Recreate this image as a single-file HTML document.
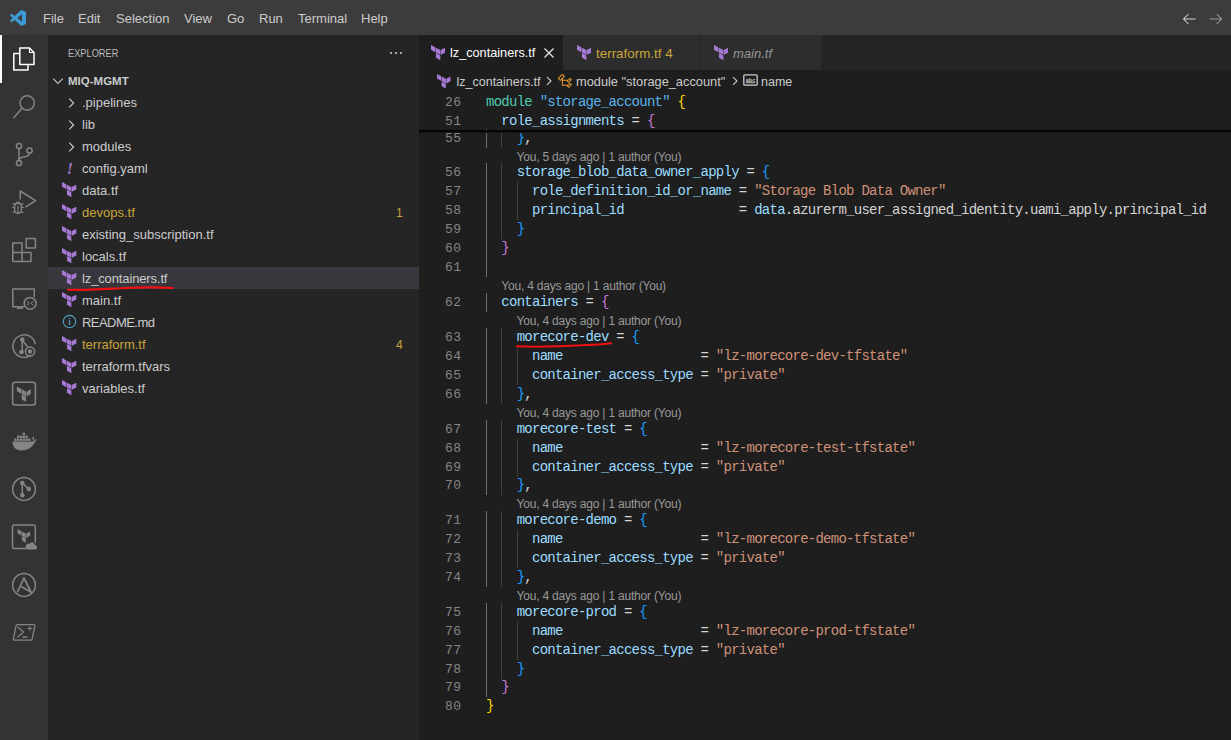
<!DOCTYPE html>
<html><head><meta charset="utf-8">
<style>
*{box-sizing:border-box}
html,body{margin:0;padding:0}
body{width:1231px;height:740px;overflow:hidden;position:relative;background:#1e1e1e;font-family:"Liberation Sans",sans-serif}
.abs{position:absolute}
svg{display:block}
.menu{position:absolute;top:1px;height:35px;line-height:35px;font-size:13px;color:#cccccc}
.ln{position:absolute;left:406.5px;width:55px;text-align:right;height:19px;line-height:19px;font-family:"Liberation Mono",monospace;font-size:13px;color:#858585;letter-spacing:0.5px}
.cd{position:absolute;left:486px;height:19px;line-height:19px;white-space:pre;font-family:"Liberation Mono",monospace;font-size:14px;color:#d4d4d4;letter-spacing:-0.74px}
.cl{position:absolute;height:16px;line-height:16px;white-space:pre;font-size:12px;letter-spacing:-0.2px;color:#999999}
.row{position:absolute;left:82px;height:22px;line-height:22px;font-size:13px;white-space:pre}
.tabt{position:absolute;top:36px;height:35px;line-height:35px;font-size:13px;white-space:pre}
.bc{position:absolute;top:71px;height:22px;line-height:22px;font-size:12.5px;color:#cccccc;white-space:pre}
</style></head><body>
<div class="abs" style="left:0;top:0;width:1231px;height:35px;background:#3c3c3c"></div>
<svg class="abs" style="left:10px;top:10px" width="16" height="16" viewBox="0 0 100 100"><path fill="#3c99d4" d="M96.5 10.8L75.9 0.9C73.5-0.3 70.7 0.2 68.8 2.1L29.4 38 12.3 25c-1.6-1.2-3.8-1.1-5.3 0.2L1.5 30.3c-1.8 1.7-1.8 4.5 0 6.2L16.3 50 1.5 63.5c-1.8 1.7-1.8 4.5 0 6.2L7 74.8c1.5 1.4 3.7 1.5 5.3 0.3L29.4 62l39.4 35.9c1.9 1.9 4.7 2.4 7.1 1.2l20.6-9.9c2.2-1 3.5-3.2 3.5-5.6V16.4c0-2.4-1.4-4.6-3.5-5.6zM75 72.7L45.1 50 75 27.3z"/></svg>
<div class="menu" style="left:43px">File</div>
<div class="menu" style="left:78px">Edit</div>
<div class="menu" style="left:116px">Selection</div>
<div class="menu" style="left:184px">View</div>
<div class="menu" style="left:227px">Go</div>
<div class="menu" style="left:259px">Run</div>
<div class="menu" style="left:298px">Terminal</div>
<div class="menu" style="left:361px">Help</div>
<svg class="abs" style="left:1181px;top:10.5px" width="16" height="16" viewBox="0 0 16 16"><path d="M14.6 8H2.6M7.5 3L2.6 8l4.9 5" fill="none" stroke="#d0d0d0" stroke-width="1.05"/></svg>
<svg class="abs" style="left:1208px;top:10.5px" width="16" height="16" viewBox="0 0 16 16"><path d="M1.6 8h12M8.7 3l4.9 5-4.9 5" fill="none" stroke="#9a9a9a" stroke-width="1.05"/></svg>

<div class="abs" style="left:0;top:35px;width:48px;height:705px;background:#333333"></div>
<svg class="abs" style="left:0;top:0" width="48" height="740" viewBox="0 0 48 740">
<rect x="0" y="35" width="2" height="48" fill="#ffffff"/>
<g fill="none" stroke="#ffffff" stroke-width="1.5" stroke-linejoin="round">
 <path d="M19.5 53.5 H13.8 V70 H28 V65"/>
 <path d="M19.8 48 H29.5 L34 52.5 V64.5 H19.8 Z"/>
 <path d="M29.5 48 V52.5 H34" stroke-width="1.2"/>
</g>
<g fill="none" stroke="#858585" stroke-width="1.5" stroke-linecap="round" stroke-linejoin="round">
 <!-- search -->
 <circle cx="27.2" cy="103" r="7.2"/>
 <path d="M21.8 108.5 L14 117.5"/>
 <!-- source control -->
 <circle cx="19" cy="146" r="2.6"/>
 <circle cx="19" cy="163" r="2.6"/>
 <circle cx="29.6" cy="150.5" r="2.6"/>
 <path d="M19 148.6 V160.4"/>
 <path d="M29.6 153.1 C29.6 157 25 157 21.5 157.5 C19.8 157.8 19 159 19 160.4"/>
 <!-- run and debug -->
 <path d="M20.2 199 V191 L35.6 200.6 L25.8 206.8"/>
 <path d="M14.6 205.5 C14.6 202.5 21.4 202.5 21.4 205.5 V210 C21.4 214.5 14.6 214.5 14.6 210 Z" stroke-width="1.4"/>
 <path d="M16 203.5 C16 201.5 20 201.5 20 203.5 M12.3 207.5 H14.6 M21.4 207.5 H23.7 M12.8 212.5 L14.8 211.5 M23.2 212.5 L21.2 211.5 M13 203.5 L14.8 205 M23 203.5 L21.2 205 M18 206 V213" stroke-width="1.1"/>
 <!-- extensions -->
 <path d="M12.8 243 H22 V252.6 H31 V261.6 H12.8 Z M12.8 252.6 H22 V261.6"/>
 <rect x="26.2" y="238.5" width="9.2" height="9.4"/>
 <!-- remote explorer -->
 <path d="M23.5 306.8 H12.8 V289 H34.3 V296.5"/>
 <path d="M17.5 308.3 H22.5"/>
 <circle cx="30.1" cy="303.3" r="5.9"/>
 <path d="M27.3 301.7 L29.3 303.3 L27.3 304.9 M33 301.7 L31 303.3 L33 304.9" stroke-width="1"/>
 <!-- gitlens -->
 <path d="M30.5 355.6 A11.3 11.3 0 1 1 35.2 343.5"/>
 <circle cx="22.3" cy="339.6" r="1.6" fill="#858585"/>
 <circle cx="21.5" cy="352" r="1.6" fill="#858585"/>
 <path d="M22.2 340 V351.5 M22.6 340.5 L27.2 346.3"/>
 <circle cx="30" cy="351.5" r="4.6"/>
 <circle cx="30" cy="351.5" r="2.2" fill="#858585" stroke="none"/>
 <!-- terraform -->
 <rect x="12.6" y="382.2" width="22.8" height="22.8" rx="2.5"/>
 <!-- git graph -->
 <circle cx="24" cy="489" r="11.4"/>
 <path d="M22.3 483 V495.2 M22.3 483 L28.8 489.1" />
 <!-- tf cloud -->
 <path d="M26.5 548.5 H14.5 Q12.5 548.5 12.5 546.5 V527 Q12.5 525 14.5 525 H33.3 Q35.3 525 35.3 527 V542"/>
 <!-- ansible -->
 <circle cx="24" cy="585" r="11.4"/>
 <!-- powershell -->
 <path d="M17.6 624.6 H33.6 Q35.1 624.6 34.8 626 L32.2 638.8 Q31.9 640.2 30.4 640.2 H14.6 Q13.1 640.2 13.4 638.8 L16 626 Q16.3 624.6 17.6 624.6 Z" stroke-width="1.3"/>
 <path d="M18.2 627.5 L23.6 632 L17.8 637 M22.8 637 H27" stroke-width="1.3"/>
 <path d="M29.8 626.5 V630.5 M27.8 628.5 H31.8" stroke-width="1"/>
</g>
<g fill="#858585">
 <!-- gitgraph dots -->
 <circle cx="22.3" cy="483" r="2.3"/>
 <circle cx="28.8" cy="489.1" r="2.3"/>
 <circle cx="22.3" cy="495.2" r="2.3"/>
 <!-- terraform logo in square (grey) -->
 <path transform="translate(16.9,386.5) scale(0.66,0.64) translate(-1.44,0)" d="M1.44 0v7.575l6.561 3.79V3.787zm21.12 4.227l-6.561 3.791v7.574l6.56-3.787zM8.72 4.23v7.575l6.561 3.787V8.018zm0 8.405v7.575L15.28 24v-7.578z"/>
 <!-- tf cloud logo -->
 <path transform="translate(17.5,529) scale(0.6,0.57) translate(-1.44,0)" d="M1.44 0v7.575l6.561 3.79V3.787zm21.12 4.227l-6.561 3.791v7.574l6.56-3.787zM8.72 4.23v7.575l6.561 3.787V8.018zm0 8.405v7.575L15.28 24v-7.578z"/>
 <path d="M27.8 549.6 H34.6 A2.3 2.3 0 0 0 35 545 A3 3 0 0 0 29.6 543.8 A2.6 2.6 0 0 0 27.8 549.6 Z"/>
 <!-- ansible A -->
 <path d="M17.3 592.3 L24 578 L31.2 592.3 L21.3 586.4" fill="none" stroke="#858585" stroke-width="1.7" stroke-linejoin="round"/>
 <!-- docker -->
 <path d="M12.5 441.5 H32 C33.3 441.5 34 440.6 34.6 439.8 C35.5 439.3 36.2 439.4 36.6 439.8 C35.8 440.3 35.2 441.4 34.6 442.5 C32.5 447.5 27.5 450.5 21 450.5 C15.5 450.5 12.8 447 12.5 441.5 Z"/>
 <path d="M32.6 440 C32.2 438.5 32.5 437.2 33.3 436.6 C34 437.2 34.3 438.3 34.1 439.5 Z"/>
 <rect x="14.2" y="438.5" width="2.4" height="2.4"/><rect x="17" y="438.5" width="2.4" height="2.4"/><rect x="19.8" y="438.5" width="2.4" height="2.4"/><rect x="22.6" y="438.5" width="2.4" height="2.4"/><rect x="25.4" y="438.5" width="2.4" height="2.4"/><rect x="28.2" y="438.5" width="2.4" height="2.4"/>
 <rect x="17" y="435.6" width="2.4" height="2.4"/><rect x="19.8" y="435.6" width="2.4" height="2.4"/><rect x="22.6" y="435.6" width="2.4" height="2.4"/><rect x="25.4" y="435.6" width="2.4" height="2.4"/>
 <rect x="22.6" y="432.7" width="2.4" height="2.4"/>
</g>
</svg>


<div class="abs" style="left:48px;top:35px;width:371px;height:705px;background:#252526"></div>
<div class="abs" style="left:68px;top:46px;height:14px;line-height:14px;font-size:11px;color:#bbbbbb;transform:scaleX(0.84);transform-origin:0 0">EXPLORER</div>
<svg class="abs" style="left:388px;top:45px" width="16" height="16" viewBox="0 0 16 16"><circle cx="3" cy="8" r="1.1" fill="#c5c5c5"/><circle cx="8" cy="8" r="1.1" fill="#c5c5c5"/><circle cx="13" cy="8" r="1.1" fill="#c5c5c5"/></svg>
<svg class="abs" style="left:50px;top:73px" width="16" height="16" viewBox="0 0 16 16"><path d="M3.2 5.6l4.8 4.8 4.8-4.8" fill="none" stroke="#c5c5c5" stroke-width="1.1"/></svg>
<div class="abs" style="left:68px;top:73px;height:16px;line-height:16px;font-size:11.5px;font-weight:bold;color:#cccccc">MIQ-MGMT</div>
<svg class="abs" style="left:63px;top:95px" width="16" height="16" viewBox="0 0 16 16"><path d="M6.2 3.6l4.4 4.4-4.4 4.4" fill="none" stroke="#d0d0d0" stroke-width="1.1"/></svg>
<div class="row" style="top:92px;color:#cccccc;letter-spacing:0">.pipelines</div>
<svg class="abs" style="left:63px;top:117px" width="16" height="16" viewBox="0 0 16 16"><path d="M6.2 3.6l4.4 4.4-4.4 4.4" fill="none" stroke="#d0d0d0" stroke-width="1.1"/></svg>
<div class="row" style="top:114px;color:#cccccc;letter-spacing:0">lib</div>
<svg class="abs" style="left:63px;top:139px" width="16" height="16" viewBox="0 0 16 16"><path d="M6.2 3.6l4.4 4.4-4.4 4.4" fill="none" stroke="#d0d0d0" stroke-width="1.1"/></svg>
<div class="row" style="top:136px;color:#cccccc;letter-spacing:0">modules</div>
<div class="abs" style="left:66.5px;top:159px;line-height:22px;color:#a074c4;font:italic bold 17px 'Liberation Serif',serif">!</div>
<div class="row" style="top:158px;color:#cccccc;letter-spacing:0">config.yaml</div>
<svg class="abs" style="left:62.3px;top:182.4px" width="14.3" height="15.2" viewBox="1.44 0 21.12 24" preserveAspectRatio="none"><path fill="#a67ad4" d="M1.44 0v7.575l6.561 3.79V3.787zm21.12 4.227l-6.561 3.791v7.574l6.56-3.787zM8.72 4.23v7.575l6.561 3.787V8.018zm0 8.405v7.575L15.28 24v-7.578z"/></svg>
<div class="row" style="top:180px;color:#cccccc;letter-spacing:0">data.tf</div>
<svg class="abs" style="left:62.3px;top:204.4px" width="14.3" height="15.2" viewBox="1.44 0 21.12 24" preserveAspectRatio="none"><path fill="#a67ad4" d="M1.44 0v7.575l6.561 3.79V3.787zm21.12 4.227l-6.561 3.791v7.574l6.56-3.787zM8.72 4.23v7.575l6.561 3.787V8.018zm0 8.405v7.575L15.28 24v-7.578z"/></svg>
<div class="row" style="top:202px;color:#c9a63a;letter-spacing:0">devops.tf</div>
<div class="abs" style="left:396px;top:202px;line-height:22px;height:22px;color:#c9a63a;font-size:12px">1</div>
<svg class="abs" style="left:62.3px;top:226.4px" width="14.3" height="15.2" viewBox="1.44 0 21.12 24" preserveAspectRatio="none"><path fill="#a67ad4" d="M1.44 0v7.575l6.561 3.79V3.787zm21.12 4.227l-6.561 3.791v7.574l6.56-3.787zM8.72 4.23v7.575l6.561 3.787V8.018zm0 8.405v7.575L15.28 24v-7.578z"/></svg>
<div class="row" style="top:224px;color:#cccccc;letter-spacing:0">existing_subscription.tf</div>
<svg class="abs" style="left:62.3px;top:248.4px" width="14.3" height="15.2" viewBox="1.44 0 21.12 24" preserveAspectRatio="none"><path fill="#a67ad4" d="M1.44 0v7.575l6.561 3.79V3.787zm21.12 4.227l-6.561 3.791v7.574l6.56-3.787zM8.72 4.23v7.575l6.561 3.787V8.018zm0 8.405v7.575L15.28 24v-7.578z"/></svg>
<div class="row" style="top:246px;color:#cccccc;letter-spacing:0">locals.tf</div>
<div class="abs" style="left:48px;top:267px;width:371px;height:22px;background:#37373d"></div>
<svg class="abs" style="left:62.3px;top:270.4px" width="14.3" height="15.2" viewBox="1.44 0 21.12 24" preserveAspectRatio="none"><path fill="#a67ad4" d="M1.44 0v7.575l6.561 3.79V3.787zm21.12 4.227l-6.561 3.791v7.574l6.56-3.787zM8.72 4.23v7.575l6.561 3.787V8.018zm0 8.405v7.575L15.28 24v-7.578z"/></svg>
<div class="row" style="top:268px;color:#cccccc;letter-spacing:-0.13px">lz_containers.tf</div>
<svg class="abs" style="left:62.3px;top:292.4px" width="14.3" height="15.2" viewBox="1.44 0 21.12 24" preserveAspectRatio="none"><path fill="#a67ad4" d="M1.44 0v7.575l6.561 3.79V3.787zm21.12 4.227l-6.561 3.791v7.574l6.56-3.787zM8.72 4.23v7.575l6.561 3.787V8.018zm0 8.405v7.575L15.28 24v-7.578z"/></svg>
<div class="row" style="top:290px;color:#cccccc;letter-spacing:0">main.tf</div>
<svg class="abs" style="left:62px;top:313.7px" width="15" height="15" viewBox="0 0 15 15"><circle cx="7.5" cy="7.5" r="6.2" fill="none" stroke="#519aba" stroke-width="1.2"/><rect x="6.8" y="6.3" width="1.4" height="4.6" fill="#519aba"/><rect x="6.8" y="3.8" width="1.4" height="1.4" fill="#519aba"/></svg>
<div class="row" style="top:312px;color:#cccccc;letter-spacing:-0.55px">README.md</div>
<svg class="abs" style="left:62.3px;top:336.4px" width="14.3" height="15.2" viewBox="1.44 0 21.12 24" preserveAspectRatio="none"><path fill="#a67ad4" d="M1.44 0v7.575l6.561 3.79V3.787zm21.12 4.227l-6.561 3.791v7.574l6.56-3.787zM8.72 4.23v7.575l6.561 3.787V8.018zm0 8.405v7.575L15.28 24v-7.578z"/></svg>
<div class="row" style="top:334px;color:#c9a63a;letter-spacing:0">terraform.tf</div>
<div class="abs" style="left:396px;top:334px;line-height:22px;height:22px;color:#c9a63a;font-size:12px">4</div>
<svg class="abs" style="left:62.3px;top:358.4px" width="14.3" height="15.2" viewBox="1.44 0 21.12 24" preserveAspectRatio="none"><path fill="#a67ad4" d="M1.44 0v7.575l6.561 3.79V3.787zm21.12 4.227l-6.561 3.791v7.574l6.56-3.787zM8.72 4.23v7.575l6.561 3.787V8.018zm0 8.405v7.575L15.28 24v-7.578z"/></svg>
<div class="row" style="top:356px;color:#cccccc;letter-spacing:0">terraform.tfvars</div>
<svg class="abs" style="left:62.3px;top:380.4px" width="14.3" height="15.2" viewBox="1.44 0 21.12 24" preserveAspectRatio="none"><path fill="#a67ad4" d="M1.44 0v7.575l6.561 3.79V3.787zm21.12 4.227l-6.561 3.791v7.574l6.56-3.787zM8.72 4.23v7.575l6.561 3.787V8.018zm0 8.405v7.575L15.28 24v-7.578z"/></svg>
<div class="row" style="top:378px;color:#cccccc;letter-spacing:0">variables.tf</div>
<svg class="abs" style="left:66px;top:283px" width="110" height="10" viewBox="0 0 110 10"><path d="M2 6.8 C20 7.2 35 6.2 55 5.2 C75 4.2 90 3.8 107 5" fill="none" stroke="#f01212" stroke-width="2.1" stroke-linecap="round"/></svg>

<div class="abs" style="left:419px;top:35px;width:812px;height:35px;background:#252526"></div>
<div class="abs" style="left:419px;top:35px;width:144px;height:35px;background:#1e1e1e"></div>
<div class="abs" style="left:563px;top:35px;width:137px;height:35px;background:#2d2d2d"></div>
<div class="abs" style="left:700px;top:35px;width:121px;height:35px;background:#2d2d2d"></div>
<div class="abs" style="left:700px;top:35px;width:1px;height:35px;background:#252526"></div>
<svg class="abs" style="left:431px;top:44.5px" width="14.3" height="15.2" viewBox="1.44 0 21.12 24" preserveAspectRatio="none"><path fill="#a67ad4" d="M1.44 0v7.575l6.561 3.79V3.787zm21.12 4.227l-6.561 3.791v7.574l6.56-3.787zM8.72 4.23v7.575l6.561 3.787V8.018zm0 8.405v7.575L15.28 24v-7.578z"/></svg>
<div class="tabt" style="left:450px;color:#ffffff;font-size:12.7px">lz_containers.tf</div>
<svg class="abs" style="left:541px;top:45px" width="16" height="16" viewBox="0 0 16 16"><path d="M3.5 3.5l9 9M12.5 3.5l-9 9" fill="none" stroke="#e8e8e8" stroke-width="1.2"/></svg>
<svg class="abs" style="left:576.5px;top:44.5px" width="14.3" height="15.2" viewBox="1.44 0 21.12 24" preserveAspectRatio="none"><path fill="#a67ad4" d="M1.44 0v7.575l6.561 3.79V3.787zm21.12 4.227l-6.561 3.791v7.574l6.56-3.787zM8.72 4.23v7.575l6.561 3.787V8.018zm0 8.405v7.575L15.28 24v-7.578z"/></svg>
<div class="tabt" style="left:596px;color:#c9a63a;font-size:13.4px">terraform.tf 4</div>
<svg class="abs" style="left:714px;top:44.5px" width="14.3" height="15.2" viewBox="1.44 0 21.12 24" preserveAspectRatio="none"><path fill="#a67ad4" d="M1.44 0v7.575l6.561 3.79V3.787zm21.12 4.227l-6.561 3.791v7.574l6.56-3.787zM8.72 4.23v7.575l6.561 3.787V8.018zm0 8.405v7.575L15.28 24v-7.578z"/></svg>
<div class="tabt" style="left:733px;color:#969696;font-style:italic;font-size:13px">main.tf</div>

<svg class="abs" style="left:437px;top:73.5px" width="13.5" height="14.5" viewBox="1.44 0 21.12 24" preserveAspectRatio="none"><path fill="#a67ad4" d="M1.44 0v7.575l6.561 3.79V3.787zm21.12 4.227l-6.561 3.791v7.574l6.56-3.787zM8.72 4.23v7.575l6.561 3.787V8.018zm0 8.405v7.575L15.28 24v-7.578z"/></svg>
<div class="bc" style="left:456.5px">lz_containers.tf</div>
<svg class="abs" style="left:543px;top:73px" width="12" height="16" viewBox="0 0 12 16"><path d="M4 4.2l4 3.8-4 3.8" fill="none" stroke="#cccccc" stroke-width="1.1"/></svg>
<svg class="abs" style="left:556.8px;top:72.5px" width="16" height="16" viewBox="0 0 16 16"><path fill="#ee9d28" d="M11.34 9.71h.71l2.67-2.67v-.71L13.38 5h-.7l-1.82 1.81h-5V5.56l1.86-1.85V3l-2-2H5L1 5v.71l2 2h.71l1.14-1.15v5.79l.5.5H10v.52l1.33 1.34h.71l2.67-2.670v-.71L13.37 10h-.7l-1.86 1.85h-5v-4H10v.48l1.34 1.380zm1.69-3.65l.63.63-2 2-.63-.63 2-2zm0 5l.63.63-2 2-.63-.63 2-2zM3.35 6.650l-1.29-1.3 3.29-3.29 1.3 1.29-3.3 3.300z"/></svg>
<div class="bc" style="left:576px;font-size:12.8px">module "storage_account"</div>
<svg class="abs" style="left:729px;top:73px" width="12" height="16" viewBox="0 0 12 16"><path d="M4 4.2l4 3.8-4 3.8" fill="none" stroke="#cccccc" stroke-width="1.1"/></svg>
<svg class="abs" style="left:743px;top:74px" width="15" height="12" viewBox="0 0 15 12"><rect x="0.8" y="0.8" width="13.4" height="10.4" rx="1" fill="none" stroke="#cccccc" stroke-width="1.3"/><text x="7.5" y="7.5" font-size="5.5" font-weight="bold" text-anchor="middle" fill="#cccccc" font-family="Liberation Sans">abc</text><rect x="3" y="8.3" width="9" height="0.9" fill="#cccccc"/></svg>
<div class="bc" style="left:761px">name</div>

<div class="abs" style="left:486px;top:129px;width:1px;height:19px;background:#6e6e6e"></div>
<div class="abs" style="left:486px;top:163px;width:1px;height:114px;background:#6e6e6e"></div>
<div class="abs" style="left:486px;top:293px;width:1px;height:19px;background:#6e6e6e"></div>
<div class="abs" style="left:486px;top:328px;width:1px;height:76px;background:#6e6e6e"></div>
<div class="abs" style="left:486px;top:420px;width:1px;height:75px;background:#6e6e6e"></div>
<div class="abs" style="left:486px;top:511px;width:1px;height:76px;background:#6e6e6e"></div>
<div class="abs" style="left:486px;top:603px;width:1px;height:94px;background:#6e6e6e"></div>
<div class="abs" style="left:501px;top:129px;width:1px;height:19px;background:#404040"></div>
<div class="abs" style="left:501px;top:163px;width:1px;height:76px;background:#404040"></div>
<div class="abs" style="left:501px;top:328px;width:1px;height:76px;background:#404040"></div>
<div class="abs" style="left:501px;top:420px;width:1px;height:75px;background:#404040"></div>
<div class="abs" style="left:501px;top:511px;width:1px;height:76px;background:#404040"></div>
<div class="abs" style="left:501px;top:603px;width:1px;height:76px;background:#404040"></div>
<div class="abs" style="left:517px;top:182px;width:1px;height:38px;background:#404040"></div>
<div class="abs" style="left:517px;top:347px;width:1px;height:38px;background:#404040"></div>
<div class="abs" style="left:517px;top:439px;width:1px;height:38px;background:#404040"></div>
<div class="abs" style="left:517px;top:530px;width:1px;height:38px;background:#404040"></div>
<div class="abs" style="left:517px;top:622px;width:1px;height:38px;background:#404040"></div>
<div class="ln" style="top:93px">26</div>
<div class="cd" style="top:93.4px"><span style="color:#4ec9b0">module</span> <span style="color:#5ab4ea">&quot;storage_account&quot;</span> <span style="color:#ffd700">{</span></div>
<div class="ln" style="top:112px">51</div>
<div class="cd" style="top:112.4px">  <span style="color:#9cdcfe">role_assignments</span><span style="color:#d4d4d4"> = </span><span style="color:#cf78d8">{</span></div>
<div class="ln" style="top:129px">55</div>
<div class="cd" style="top:129.4px">    <span style="color:#179fff">}</span><span style="color:#d4d4d4">,</span></div>
<div class="ln" style="top:163px">56</div>
<div class="cd" style="top:163.4px">    <span style="color:#9cdcfe">storage_blob_data_owner_apply</span><span style="color:#d4d4d4"> = </span><span style="color:#179fff">{</span></div>
<div class="cl" style="top:149px;left:516.6px">You, 5 days ago | 1 author (You)</div>
<div class="ln" style="top:182px">57</div>
<div class="cd" style="top:182.4px">      <span style="color:#9cdcfe">role_definition_id_or_name</span><span style="color:#d4d4d4"> = </span><span style="color:#ce9178">&quot;Storage Blob Data Owner&quot;</span></div>
<div class="ln" style="top:201px">58</div>
<div class="cd" style="top:201.4px">      <span style="color:#9cdcfe">principal_id</span><span style="color:#d4d4d4">               = </span><span style="color:#9cdcfe">data</span><span style="color:#d4d4d4">.azurerm_user_assigned_identity.uami_apply.principal_id</span></div>
<div class="ln" style="top:220px">59</div>
<div class="cd" style="top:220.4px">    <span style="color:#179fff">}</span></div>
<div class="ln" style="top:239px">60</div>
<div class="cd" style="top:239.4px">  <span style="color:#cf78d8">}</span></div>
<div class="ln" style="top:258px">61</div>
<div class="cd" style="top:258.4px"></div>
<div class="ln" style="top:293px">62</div>
<div class="cd" style="top:293.4px">  <span style="color:#9cdcfe">containers</span><span style="color:#d4d4d4"> = </span><span style="color:#cf78d8">{</span></div>
<div class="cl" style="top:278px;left:501.3px">You, 4 days ago | 1 author (You)</div>
<div class="ln" style="top:328px">63</div>
<div class="cd" style="top:328.4px">    <span style="color:#9cdcfe">morecore-dev</span><span style="color:#d4d4d4"> = </span><span style="color:#179fff">{</span></div>
<div class="cl" style="top:313px;left:516.6px">You, 4 days ago | 1 author (You)</div>
<div class="ln" style="top:347px">64</div>
<div class="cd" style="top:347.4px">      <span style="color:#9cdcfe">name</span><span style="color:#d4d4d4">                  = </span><span style="color:#ce9178">&quot;lz-morecore-dev-tfstate&quot;</span></div>
<div class="ln" style="top:366px">65</div>
<div class="cd" style="top:366.4px">      <span style="color:#9cdcfe">container_access_type</span><span style="color:#d4d4d4"> = </span><span style="color:#ce9178">&quot;private&quot;</span></div>
<div class="ln" style="top:385px">66</div>
<div class="cd" style="top:385.4px">    <span style="color:#179fff">}</span><span style="color:#d4d4d4">,</span></div>
<div class="ln" style="top:420px">67</div>
<div class="cd" style="top:420.4px">    <span style="color:#9cdcfe">morecore-test</span><span style="color:#d4d4d4"> = </span><span style="color:#179fff">{</span></div>
<div class="cl" style="top:405px;left:516.6px">You, 4 days ago | 1 author (You)</div>
<div class="ln" style="top:439px">68</div>
<div class="cd" style="top:439.4px">      <span style="color:#9cdcfe">name</span><span style="color:#d4d4d4">                  = </span><span style="color:#ce9178">&quot;lz-morecore-test-tfstate&quot;</span></div>
<div class="ln" style="top:458px">69</div>
<div class="cd" style="top:458.4px">      <span style="color:#9cdcfe">container_access_type</span><span style="color:#d4d4d4"> = </span><span style="color:#ce9178">&quot;private&quot;</span></div>
<div class="ln" style="top:476px">70</div>
<div class="cd" style="top:476.4px">    <span style="color:#179fff">}</span><span style="color:#d4d4d4">,</span></div>
<div class="ln" style="top:511px">71</div>
<div class="cd" style="top:511.4px">    <span style="color:#9cdcfe">morecore-demo</span><span style="color:#d4d4d4"> = </span><span style="color:#179fff">{</span></div>
<div class="cl" style="top:496px;left:516.6px">You, 4 days ago | 1 author (You)</div>
<div class="ln" style="top:530px">72</div>
<div class="cd" style="top:530.4px">      <span style="color:#9cdcfe">name</span><span style="color:#d4d4d4">                  = </span><span style="color:#ce9178">&quot;lz-morecore-demo-tfstate&quot;</span></div>
<div class="ln" style="top:549px">73</div>
<div class="cd" style="top:549.4px">      <span style="color:#9cdcfe">container_access_type</span><span style="color:#d4d4d4"> = </span><span style="color:#ce9178">&quot;private&quot;</span></div>
<div class="ln" style="top:568px">74</div>
<div class="cd" style="top:568.4px">    <span style="color:#179fff">}</span><span style="color:#d4d4d4">,</span></div>
<div class="ln" style="top:603px">75</div>
<div class="cd" style="top:603.4px">    <span style="color:#9cdcfe">morecore-prod</span><span style="color:#d4d4d4"> = </span><span style="color:#179fff">{</span></div>
<div class="cl" style="top:588px;left:516.6px">You, 4 days ago | 1 author (You)</div>
<div class="ln" style="top:622px">76</div>
<div class="cd" style="top:622.4px">      <span style="color:#9cdcfe">name</span><span style="color:#d4d4d4">                  = </span><span style="color:#ce9178">&quot;lz-morecore-prod-tfstate&quot;</span></div>
<div class="ln" style="top:641px">77</div>
<div class="cd" style="top:641.4px">      <span style="color:#9cdcfe">container_access_type</span><span style="color:#d4d4d4"> = </span><span style="color:#ce9178">&quot;private&quot;</span></div>
<div class="ln" style="top:660px">78</div>
<div class="cd" style="top:660.4px">    <span style="color:#179fff">}</span></div>
<div class="ln" style="top:678px">79</div>
<div class="cd" style="top:678.4px">  <span style="color:#cf78d8">}</span></div>
<div class="ln" style="top:697px">80</div>
<div class="cd" style="top:697.4px"><span style="color:#ffd700">}</span></div>
<div class="abs" style="left:419px;top:130px;width:812px;height:3px;background:linear-gradient(#000000,#0b0b0b 60%,#1a1a1a)"></div>
<svg class="abs" style="left:515px;top:340px" width="100" height="10" viewBox="0 0 100 10"><path d="M2 6.2 C25 7.6 50 6.2 72 5 C82 4.6 90 3.8 96 3.2" fill="none" stroke="#f01212" stroke-width="2.1" stroke-linecap="round"/></svg>
</body></html>
